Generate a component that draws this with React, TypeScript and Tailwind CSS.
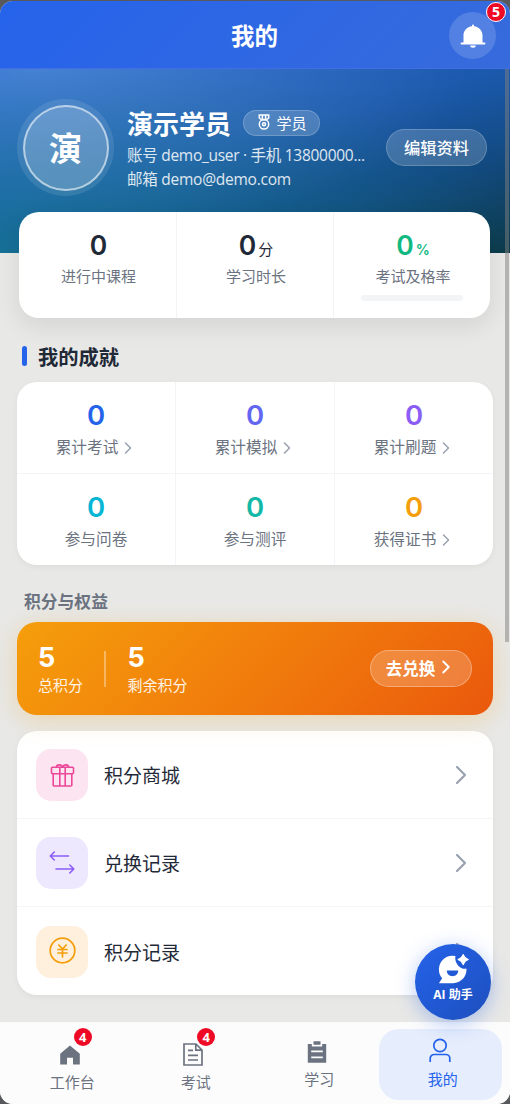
import type { ReactNode } from "react"
import { ChevronRight } from "lucide-react"
import clsx from "clsx"

const achievements = [
  { label: "累计考试", value: 0, color: "text-[#2563eb]", link: true },
  { label: "累计模拟", value: 0, color: "text-[#6366f1]", link: true },
  { label: "累计刷题", value: 0, color: "text-[#8b5cf6]", link: true },
  { label: "参与问卷", value: 0, color: "text-[#06b6d4]", link: false },
  { label: "参与测评", value: 0, color: "text-[#14b8a6]", link: false },
  { label: "获得证书", value: 0, color: "text-[#f59e0b]", link: true },
]

const BellIcon = () => (
  <svg width="26" height="26" viewBox="0 0 26 26" fill="currentColor">
    <path d="M12 2.500a1 1 0 0 1 2 0v.8c4.800.5 8.500 4.200 8.500 9v7.200h2a.9.9 0 0 1 0 1.900H1.500a.9.9 0 0 1 0-1.900h2v-7.200c0-4.800 3.700-8.500 8.500-9z" />
    <path d="M10.200 22.600h5.600a2.800 2.200 0 0 1-5.600 0z" />
  </svg>
)

const MedalIcon = () => (
  <svg width="14" height="16" viewBox="0 0 14 16" fill="none" stroke="currentColor" strokeWidth="1.500" className="-mt-[3px]">
    <path d="M2.300 1h9.400v3l-2.300 1.800H4.600L2.300 4zM5.400 1v4M8.600 1v4" />
    <circle cx="7" cy="10.300" r="4.700" />
    <circle cx="7" cy="10.300" r="1.500" />
  </svg>
)

const GiftIcon = () => (
  <svg width="25" height="25" viewBox="0 0 25 25" fill="none" stroke="currentColor" strokeWidth="1.600" strokeLinejoin="round">
    <rect x="1.500" y="4.300" width="22" height="6.400" rx="1" />
    <path d="M3.200 10.700v11.300a1 1 0 0 0 1 1h16.600a1 1 0 0 0 1-1V10.700M9.800 4.300v18.700M15.200 4.300v18.700" />
    <path d="M6.500 4.300c0-3.200 5-3.200 6 0 1-3.200 6-3.200 6 0" />
  </svg>
)

const SwapIcon = () => (
  <svg width="26" height="26" viewBox="0 0 26 26" fill="none" stroke="currentColor" strokeWidth="1.600" strokeLinecap="round" strokeLinejoin="round">
    <path d="M19.500 6H1.300M5.300 2l-4 4 4 4M7 19h17.800M20.800 15l4 4-4 4" />
  </svg>
)

const YenIcon = () => (
  <svg width="27" height="27" viewBox="0 0 27 27" fill="none" stroke="currentColor" strokeWidth="1.700" strokeLinecap="round" className="-mt-[3px]">
    <circle cx="13.500" cy="13.500" r="12.300" />
    <path d="M9.800 8l3.700 4L17.200 8M9 12.500h9M9 16h9M13.500 12v8" />
  </svg>
)

const HomeIcon = () => (
  <svg width="20" height="20" viewBox="0 0 20 20" fill="currentColor">
    <path d="M10 .4 19.800 8.800V19.600H13V12.800H7V19.600H.2V8.800z" />
  </svg>
)

const ExamIcon = () => (
  <svg width="20" height="23" viewBox="0 0 20 23" fill="none" stroke="currentColor" strokeWidth="1.700">
    <path d="M1 1h12l6 6v15H1zM12.800 1v6.200H19M5 7.400h5M5 12.400h10M5 17h10" />
  </svg>
)

const StudyIcon = () => (
  <svg width="20" height="22" viewBox="0 0 20 22">
    <path d="M.8 3h4v2.400h10.400V3h4v18.700H.8z" fill="currentColor" />
    <path d="M6.500.3h7v3.500h-7z" fill="currentColor" />
    <path d="M4.200 10.300h11.600M4.200 16.300h11.600" stroke="#fcfcfc" strokeWidth="1.700" />
  </svg>
)

const UserIcon = () => (
  <svg width="22" height="25" viewBox="0 0 22 25" fill="none" stroke="currentColor" strokeWidth="1.700" className="-mt-[3px] shrink-0">
    <circle cx="11" cy="7.500" r="6.200" />
    <path d="M1.200 24v-3.500a4 4 0 0 1 4-4h11.600a4 4 0 0 1 4 4V24" />
  </svg>
)

const AssistantIcon = () => (
  <svg width="31" height="30" viewBox="0 0 31 30" fill="white">
    <path d="M17.500 2A13.600 13.600 0 0 0 .9 15.500c0 4 1.300 6.600 3.300 8.800L.9 29.200H15a13.400 13.400 0 0 0 13.400-14.600c-5.500 1.700-12.600-5.600-10.900-12.600z" />
    <path d="M8.800 16.500h11.400c0 7.600-11.400 7.600-11.400 0z" fill="#2159d5" />
    <path d="M25.200.6c1 2.800 2.200 4 5 4.900-2.800 1-4 2.200-5 5.100-1-2.900-2.200-4.100-5.100-5.100 2.900-.9 4.100-2.100 5.100-4.900z" stroke="white" strokeWidth="1.200" strokeLinejoin="round" />
  </svg>
)

const menu = [
  { label: "积分商城", icon: <GiftIcon />, style: "bg-[#fce4f0] text-[#ec4899]" },
  { label: "兑换记录", icon: <SwapIcon />, style: "bg-[#ede8fd] text-[#8b5cf6]" },
  { label: "积分记录", icon: <YenIcon />, style: "bg-[#fef0dc] text-[#f59e0b]" },
]

const tabs = [
  { label: "工作台", icon: <HomeIcon />, badge: 4 },
  { label: "考试", icon: <ExamIcon />, badge: 4 },
  { label: "学习", icon: <StudyIcon /> },
  { label: "我的", icon: <UserIcon />, active: true },
]

function Stat({ label, children }: { label: string; children: ReactNode }) {
  return (
    <div className="flex w-full flex-col items-center pt-[17px] pl-[2px]">
      <div className="flex h-[32px] items-baseline font-['Inter'] text-[26.500px] leading-[32px] font-semibold">{children}</div>
      <span className="mt-[4px] text-[15px] leading-[22px] text-[#6b7280]">{label}</span>
    </div>
  )
}

export default function App() {
  return (
    <div className="h-[1104px] w-[510px] overflow-hidden bg-[#58595c] pt-px font-['Open_Sans','Noto_Sans_CJK_SC',sans-serif] text-[#1f2937]">
      <div className="relative flex h-[1103px] flex-col overflow-hidden rounded-[13px] bg-[#e8e8e6]">
        <header className="relative flex h-[68px] shrink-0 items-center justify-center border-b border-[#416fe3] bg-linear-135 from-[#2563eb] to-[#376bdc]">
          <h1 className="pt-[2px] pr-px text-[23.500px] leading-8 font-bold text-white">我的</h1>
          <button className="absolute top-[11px] right-[14px] flex size-[47px] items-center justify-center rounded-full bg-white/15 text-white">
            <BellIcon />
          </button>
          <span className="absolute top-px right-[4px] flex size-[20px] items-center justify-center rounded-full border border-white bg-[#ee0a24] text-[14px] leading-none font-bold text-white">5</span>
        </header>

        <section className="flex h-[184px] shrink-0 bg-[radial-gradient(ellipse_at_0%_100%,rgba(22,125,150,0.7)_0%,rgba(22,125,150,0)_75%),radial-gradient(ellipse_at_8%_0%,rgba(255,255,255,0.18)_0%,rgba(255,255,255,0)_65%),linear-gradient(165deg,#1f66d0_0%,#1b59ad_42%,#124a80_70%,#0c3846_100%)] pl-[17px]">
          <div className="mt-[30px] flex size-[97px] shrink-0 items-center justify-center rounded-full bg-white/10">
            <div className="flex size-[86px] items-center justify-center rounded-full border-2 border-white/55 bg-white/16 pt-[3px] text-[33px] font-bold text-white">演</div>
          </div>
          <div className="mt-[39px] ml-[13px] w-[244px] shrink-0 text-white">
            <div className="flex h-[32px] items-center">
              <h2 className="text-[26px] leading-8 font-bold whitespace-nowrap">演示学员</h2>
              <span className="ml-[12px] flex h-[26px] w-[77px] -translate-y-px items-center justify-center gap-[6px] rounded-full border border-white/20 bg-white/18 text-[15px] whitespace-nowrap">
                <MedalIcon />
                学员
              </span>
            </div>
            <p className="mt-[4px] text-[15.500px] leading-[22px] tracking-[-0.28px] whitespace-nowrap text-white/85">账号 demo_user · 手机 13800000...</p>
            <p className="mt-[2px] text-[15.500px] leading-[22px] tracking-[-0.25px] whitespace-nowrap text-white/85">邮箱 demo@demo.com</p>
          </div>
          <button className="mt-[60px] ml-[15px] h-[37px] w-[101px] shrink-0 rounded-full border border-white/20 bg-white/18 pt-px text-[16.300px] font-medium text-white">编辑资料</button>
        </section>

        <section className="relative -mt-[41px] ml-[19px] grid h-[106px] w-[471px] shrink-0 grid-cols-[158px_157px_156px] divide-x divide-[#f3f4f6] rounded-[20px] bg-white shadow-[0_8px_24px_rgba(0,0,0,0.09)]">
          <Stat label="进行中课程">0</Stat>
          <Stat label="学习时长">
            0<span className="ml-[2px] font-['Open_Sans','Noto_Sans_CJK_SC'] text-[15px] font-normal">分</span>
          </Stat>
          <div className="flex flex-col">
            <Stat label="考试及格率">
              <span className="text-[#10b981]">
                0<span className="ml-[2px] text-[14px]">%</span>
              </span>
            </Stat>
            <div className="mx-auto mt-[8px] h-[6px] w-[102px] rounded-full bg-[#f3f4f6]" />
          </div>
        </section>

        <div className="mt-[28px] ml-[22px] flex h-[20px] shrink-0 items-center gap-[11px]">
          <span className="h-[20px] w-[5px] rounded-full bg-[#2563eb]" />
          <h3 className="pt-px text-[20.300px] leading-6 font-bold">我的成就</h3>
        </div>

        <section className="mt-[15.500px] ml-[17px] grid h-[183.500px] w-[476px] shrink-0 grid-cols-[159px_159px_158px] grid-rows-[92px_91.5px] overflow-hidden rounded-[20px] bg-white shadow-[0_2px_6px_rgba(0,0,0,0.05)]">
          {achievements.map((item, index) => (
            <div
              key={item.label}
              className={clsx(
                "flex flex-col items-center border-[#f3f4f6] pt-[16px]",
                index % 3 < 2 && "border-r",
                index < 3 && "border-b"
              )}
            >
              <span className={clsx("font-['Inter'] text-[27.500px] leading-[34px] font-semibold", item.color)}>{item.value}</span>
              <span className="mt-[4px] flex items-center text-[15.700px] leading-[22px] text-[#6b7280]">
                {item.label}
                {item.link && <ChevronRight className="mt-[2px] -mr-[2px] text-gray-400" size={20} strokeWidth={1.800} />}
              </span>
            </div>
          ))}
        </section>

        <h3 className="mt-[25px] ml-[24px] shrink-0 text-[16.800px] leading-[24px] font-bold text-[#6b7280]">积分与权益</h3>

        <section className="relative z-10 mt-[8px] ml-[17px] flex h-[93px] w-[476px] shrink-0 items-center rounded-[20px] bg-linear-135 from-[#f59e0b] to-[#ea580c] px-[21px] text-white shadow-[0_5px_24px_rgba(245,158,11,0.25)]">
          <div>
            <div className="pt-px font-['Inter'] text-[27px] leading-[32px] font-bold">5</div>
            <div className="text-[15px] leading-[22px] text-white/90">总积分</div>
          </div>
          <div className="mr-[22px] ml-[21px] h-[36px] w-[1.500px] bg-white/35" />
          <div>
            <div className="pt-px font-['Inter'] text-[27px] leading-[32px] font-bold">5</div>
            <div className="text-[15px] leading-[22px] text-white/90">剩余积分</div>
          </div>
          <button className="ml-auto flex h-[37px] w-[102px] items-center justify-center rounded-full border border-white/30 bg-white/20 text-[16.500px] font-bold">
            <span className="pt-px">去兑换</span>
            <ChevronRight size={22} strokeWidth={2.100} className="-mt-[3px] -mr-px" />
          </button>
        </section>

        <section className="mt-[16px] ml-[17px] h-[264px] w-[476px] shrink-0 rounded-[20px] bg-white shadow-[0_2px_6px_rgba(0,0,0,0.05)]">
          {menu.map((item) => (
            <div key={item.label} className="flex h-[88px] items-center border-b border-[#f5f5f6] pt-px pr-[16px] pl-[19px] last:border-b-0">
              <span className={clsx("flex size-[52px] items-center justify-center rounded-[15px]", item.style)}>{item.icon}</span>
              <span className="ml-[16px] pt-[3px] text-[19px]">{item.label}</span>
              <ChevronRight className="ml-auto text-gray-400" size={32} strokeWidth={1.600} />
            </div>
          ))}
        </section>

        <nav className="mt-auto flex h-[82px] shrink-0 bg-[#fcfcfc] px-[8px] pt-[7px] pb-[4px]">
          {tabs.map((tab) => (
            <button
              key={tab.label}
              className={clsx(
                "flex flex-1 flex-col items-center rounded-[20px]",
                tab.badge ? "pt-[11px]" : "pt-[8px]",
                tab.active ? "bg-[#e6edfc] text-[#2563eb]" : "text-[#6b7280]"
              )}
            >
              <span className="relative flex h-[29px] w-[20px] items-center justify-center">
                {tab.icon}
                {tab.badge && (
                  <span className="absolute -top-[12px] left-[14px] flex size-[18px] items-center justify-center rounded-full bg-[#ee0a24] text-[13px] leading-none font-bold text-white">
                    {tab.badge}
                  </span>
                )}
              </span>
              <span className="mt-[2px] pl-[5px] text-[15px] leading-[22px]">{tab.label}</span>
            </button>
          ))}
        </nav>

        <button className="absolute top-[943px] left-[415px] z-20 flex size-[76px] flex-col items-center rounded-full bg-linear-135 from-[#2563eb] to-[#1d4fbd] pt-[10px] text-white shadow-[0_4px_20px_rgba(37,99,235,0.35)]">
          <AssistantIcon />
          <span className="mt-[2px] text-[12px] leading-[18px] font-bold whitespace-nowrap">AI 助手</span>
        </button>

        <div className="absolute top-[68px] left-[505px] z-30 h-[573px] w-[4px] bg-[#808080]/50" />
      </div>
    </div>
  )
}
